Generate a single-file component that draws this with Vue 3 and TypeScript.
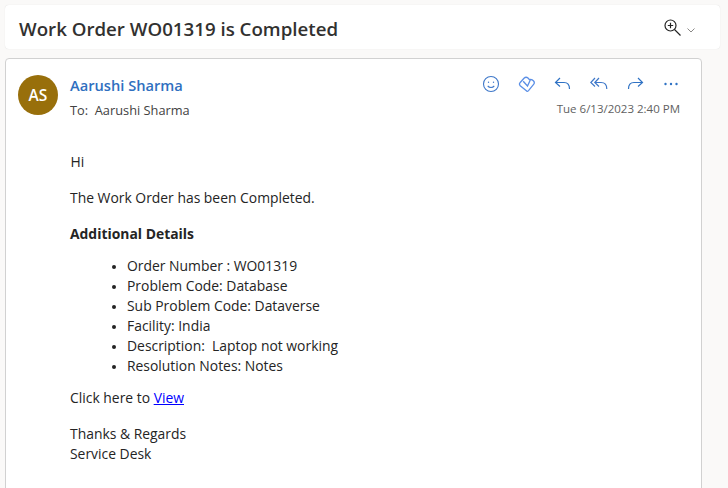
<script setup lang="ts">
const details: string[] = [
  "Order Number : WO01319",
  "Problem Code: Database",
  "Sub Problem Code: Dataverse",
  "Facility: India",
  "Description:\u00a0 Laptop not working",
  "Resolution Notes: Notes",
];
</script>

<template>
  <div class="page">
    <div class="subject">
      <span class="subject-text">Work Order WO01319 is Completed</span>
      <div class="zoom">
        <svg width="18" height="18" viewBox="0 0 18 18" fill="none" stroke="#242424">
          <circle cx="6.5" cy="6.5" r="5.5" stroke-width="1.2" />
          <path d="M6.5 3.8v5.4M3.800 6.500h5.400M10.500 10.500l6 6" stroke-width="1.2" />
        </svg>
        <svg class="chev" width="8" height="5" viewBox="0 0 8 5" fill="none" stroke="#8a8886">
          <path d="M.5.5 4 4 7.500.5" />
        </svg>
      </div>
    </div>

    <div class="mail">
      <div class="head">
        <div class="avatar">AS</div>
        <div class="who">
          <div class="sender">Aarushi Sharma</div>
          <div class="to">To:&nbsp; Aarushi Sharma</div>
        </div>
        <div class="meta">
          <div class="actions">
            <svg width="18" height="18" viewBox="0 0 18 18" fill="none" stroke="#3f78c9" stroke-width="1.1">
              <circle cx="9" cy="9" r="7.500" />
              <circle cx="6.500" cy="7.200" r=".7" fill="#3f78c9" stroke="none" />
              <circle cx="11.500" cy="7.200" r=".7" fill="#3f78c9" stroke="none" />
              <path d="M5.700 10.800c1.700 2.200 4.900 2.200 6.600 0" />
            </svg>
            <svg width="18" height="18" viewBox="0 0 18 18" fill="none" stroke="#5b8fe6" stroke-width="1.300">
              <path d="M9 16.300 2.200 10.700Q.7 9 2.200 7.500L6 3.200Q8 1.300 10 3L11.500 4.700Q13.800 3.900 15.600 6 17 7.700 15.600 9.400L10.500 15.600Q9.700 16.500 9 16.300z" />
              <path d="M5.200 6.200 9.500 11 12.300 5" />
            </svg>
            <svg width="18" height="18" viewBox="0 0 18 18" fill="none" stroke="#2f72c4" stroke-width="1.2">
              <path d="M6 3 1.500 7.500 6 11.500M1.500 7.500h8.500c3.500 0 5.500 2.500 5.500 6.500" />
            </svg>
            <svg width="18" height="18" viewBox="0 0 18 18" fill="none" stroke="#3f78c9" stroke-width="1.2">
              <path d="M5 3 .8 7.500 5 11.500M9 3 4.800 7.500 9 11.500M4.800 7.500H11c3.500 0 5.800 2.500 5.800 6.500" />
            </svg>
            <svg width="18" height="18" viewBox="0 0 18 18" fill="none" stroke="#2f72c4" stroke-width="1.2">
              <path d="M12 3l4.500 4.500L12 11.500M16.500 7.500H8C4.500 7.500 2.500 10 2.500 14" />
            </svg>
            <svg width="18" height="18" viewBox="0 0 18 18" fill="#2f72c4">
              <circle cx="3.500" cy="9" r="1.200" />
              <circle cx="9" cy="9" r="1.200" />
              <circle cx="14.500" cy="9" r="1.200" />
            </svg>
          </div>
          <div class="date">Tue 6/13/2023 2:40 PM</div>
        </div>
      </div>

      <div class="body">
        <p class="greeting">Hi</p>
        <p>The Work Order has been Completed.</p>
        <p class="label"><b>Additional Details</b></p>
        <ul>
          <li v-for="item in details" :key="item">{{ item }}</li>
        </ul>
        <p>Click here to <a href="#">View</a></p>
        <p>Thanks &amp; Regards<br />Service Desk</p>
      </div>
    </div>
  </div>
</template>

<style scoped>
.page {
  height: 488px;
  overflow: hidden;
  box-sizing: border-box;
  padding: 5px 8px 0 5px;
  background: #faf9f8;
  font-family: "Open Sans", "Noto Sans", sans-serif;
  color: #242424;
}

.subject {
  height: 44px;
  margin-bottom: 9px;
  padding: 0 14px;
  display: flex;
  align-items: center;
  justify-content: space-between;
  background: #fff;
  border-radius: 4px;
  box-shadow: 0 0 1px rgba(0, 0, 0, 0.15);
}

.subject-text {
  font-size: 18.700px;
  font-weight: 600;
  color: #323130;
  padding-top: 2px;
}

.zoom {
  display: flex;
  align-items: center;
  gap: 5px;
  margin-right: 11px;
  margin-top: 2px;
}

.chev {
  margin-top: 4px;
}

.mail {
  width: 697px;
  height: 440px;
  box-sizing: border-box;
  background: #fff;
  border: 1px solid #d1d1d1;
  border-radius: 4px 4px 0 0;
}

.head {
  display: flex;
  padding: 16px 21px 0 12px;
}

.avatar {
  width: 40px;
  height: 40px;
  border-radius: 50%;
  background: #986f0b;
  color: #fff;
  font-size: 15.500px;
  font-weight: 600;
  display: flex;
  align-items: center;
  justify-content: center;
}

.who {
  margin-left: 12px;
  flex: 1;
}

.sender {
  font-size: 14.670px;
  font-weight: 600;
  color: #2f6fc0;
  line-height: 20px;
}

.to {
  font-size: 12.800px;
  color: #424242;
  line-height: 18px;
  margin-top: 6px;
}

.meta {
  text-align: right;
}

.actions {
  display: flex;
  justify-content: flex-end;
  gap: 18px;
}

.date {
  font-size: 11.500px;
  color: #616161;
  margin-top: 8px;
  line-height: 16px;
}

.body {
  padding: 33px 0 0 64px;
  font-size: 13.900px;
  line-height: 20px;
  color: #242424;
}

.body p {
  margin: 0 0 16px;
}

.body p.greeting {
  padding-left: 0.4px;
}

.body p.label {
  margin-bottom: 12px;
}

.body ul {
  margin: 0 0 12px;
  padding-left: 57px;
}

.body li::marker {
  font-size: 11px;
}

.body a {
  color: #0000ff;
}
</style>
